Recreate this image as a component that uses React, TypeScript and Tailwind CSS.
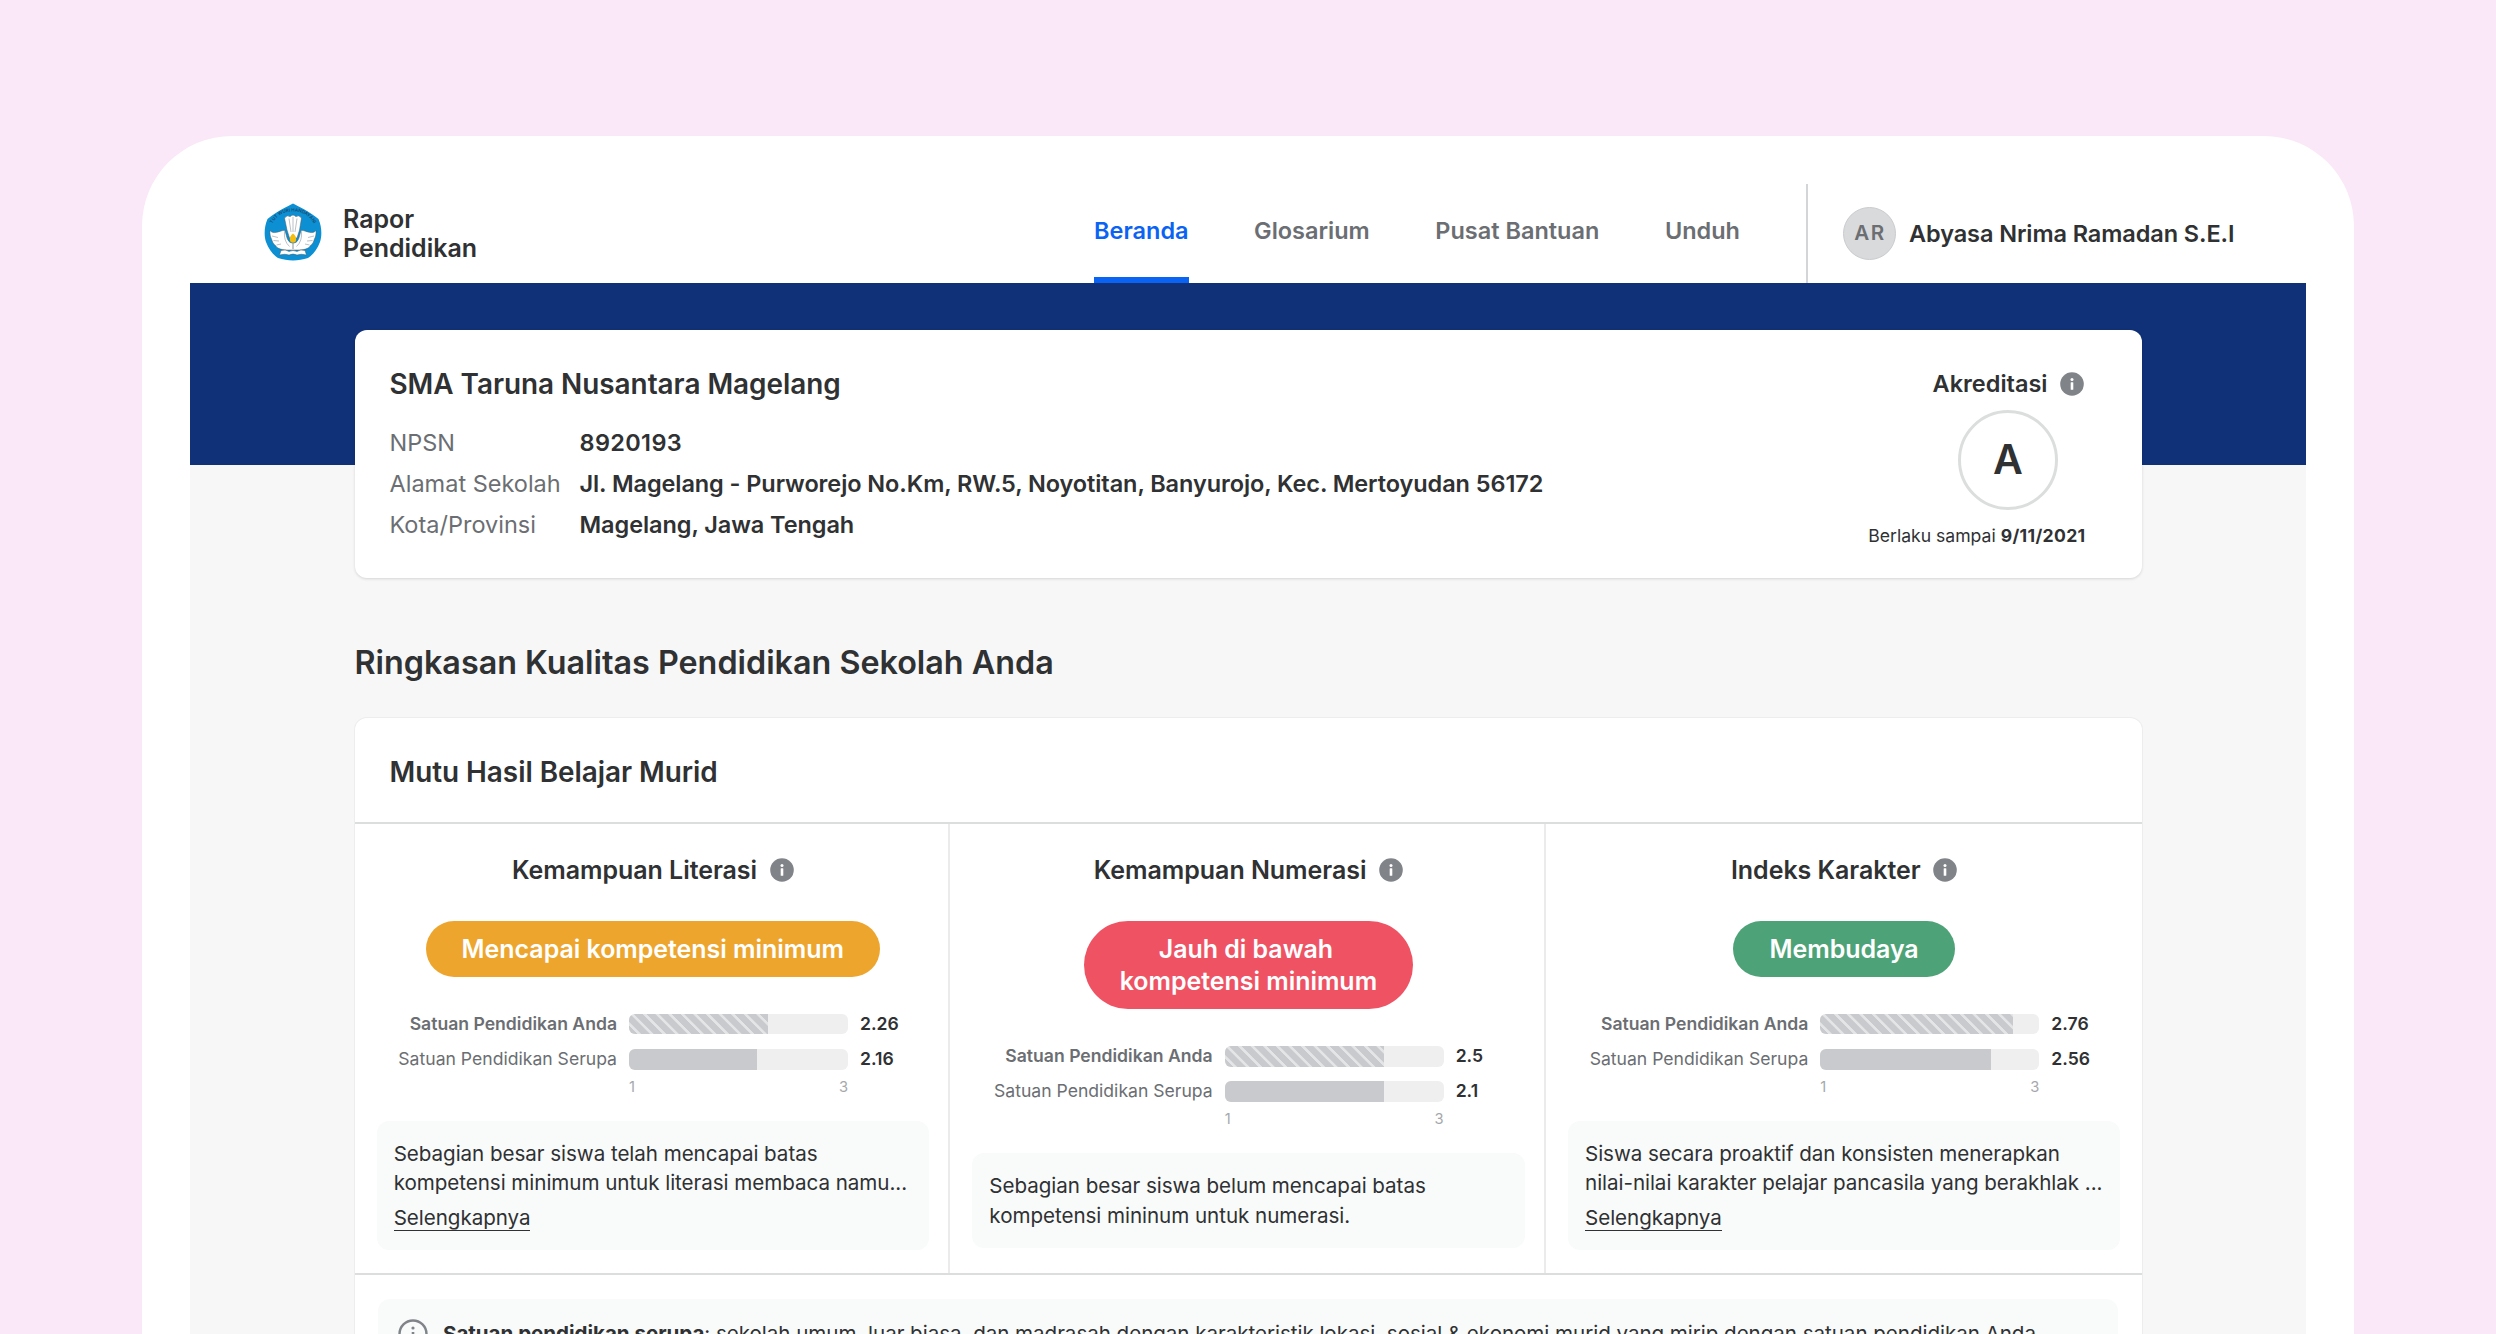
import React from "react";

const STRIPES =
  "bg-[repeating-linear-gradient(45deg,#c9cacd_0px,#c9cacd_5.7px,#e4e5e6_6.3px,#e4e5e6_8.3px,#c9cacd_8.9px)]";

function InfoIcon() {
  return (
    <svg viewBox="0 0 24 24" className="h-6 w-6 shrink-0">
      <circle cx="12" cy="12" r="11.8" fill="#808489" />
      <circle cx="12" cy="7.4" r="1.5" fill="#fff" />
      <rect x="10.7" y="10.2" width="2.6" height="7.6" rx="0.6" fill="#fff" />
    </svg>
  );
}

function Emblem() {
  return (
    <svg viewBox="0 0 58 58" className="-mt-[3px] h-[58px] w-[58px] shrink-0">
      <path
        d="M29 0.5C35 4 45 8 54.5 16C58 24 58 33 56 39C53 47 48.500 52 44 55C34 58.300 24 58.300 14 55C9.500 52 5 47 2 39C0 33 0 24 3.500 16C13 8 23 4 29 0.500Z"
        fill="#0c8fd3"
      />
      <path id="motto" d="M7.500 22.500C13 10.500 22 8.500 29 8.500S45 10.500 50.500 22.500" fill="none" />
      <text fontSize="4.500" fontWeight="600" fill="#1b4a6e" fontFamily="Inter, sans-serif">
        <textPath href="#motto" startOffset="50%" textAnchor="middle">TUT WURI HANDAYANI</textPath>
      </text>
      <g fill="#fff" stroke="#4b5a63" strokeWidth="0.5" strokeLinejoin="round">
        <path d="M20.500 15Q23.500 11.500 26 13.700Q29 10.500 32 13.700Q34.500 11.500 37.500 15L35.500 27L33 35H25.500L23 27Z" />
        <path d="M6 27.500C10 32 15 28 20.500 27.200C22.500 30.500 22 35 25 38.500C27 40.500 31 40.500 33 38.500C36 35 35.500 30.500 37.500 27.200C43 28 48 32 52 27.500C52.500 33 50.500 35.500 49.800 38C49 41 46.500 42 45 44.500C40 47.500 35 47 29 47C23 47 18 47.500 13 44.500C11.500 42 9 41 8.200 38C7.500 35.500 5.500 33 6 27.500Z" />
        <path d="M17 47.500Q22 46 25 48.500Q29 46.500 33 48.500Q36 46 41 47.500L42.500 52Q37 50.500 33 52Q29 50 25 52Q21 50.500 15.500 52Z" />
      </g>
      <g stroke="#8b979d" strokeWidth="0.600" fill="none">
        <path d="M25 15.500L27 29M29 14V29M33 15.500L31 29M8 33L14 34.500M9.500 37.500L15 38M12.500 42L17 41M50 33L44 34.500M48.500 37.500L43 38M45.500 42L41 41M20.500 28.500Q19.500 38 25.500 43.500M37.500 28.500Q38.500 38 32.500 43.500" />
      </g>
      <path d="M29 30.500C31.500 32.500 32.800 35 32 37.500C31.500 40.500 26.500 40.500 26 37.500C25.200 35 26.500 32.500 29 30.500Z" fill="#f4bd12" />
      <path d="M29 40V46" stroke="#65747c" strokeWidth="0.800" />
    </svg>
  );
}

const NAV = [
  { label: "Beranda", active: true },
  { label: "Glosarium" },
  { label: "Pusat Bantuan" },
  { label: "Unduh" },
];

function Header() {
  return (
    <header className="flex h-[99px] items-stretch pl-[74px]">
      <div className="flex items-center">
        <Emblem />
        <div className="ml-[21px] pt-[1px] text-[24.97px] leading-[29.4px] font-semibold">
          Rapor
          <br />
          Pendidikan
        </div>
      </div>
      <nav className="ml-auto flex gap-[65.5px] text-[23.5px] font-semibold">
        {NAV.map((item) => (
          <a
            key={item.label}
            className={
              item.active
                ? "flex items-center border-b-[6px] border-[#0b63f3] text-[#0b63f3]"
                : "flex items-center border-b-[6px] border-transparent text-[#6b6e72]"
            }
          >
            {item.label}
          </a>
        ))}
      </nav>
      <div className="ml-[66px] flex w-[500px] items-center border-l-2 border-[#d3d5d7] pl-[35px]">
        <div className="flex h-[53px] w-[53px] items-center justify-center rounded-full border border-[#c9cbcd] bg-[#d9dadc] pl-[1px] text-[20.6px] font-semibold tracking-[1.5px] text-[#6b6e72]">
          AR
        </div>
        <div className="ml-[13px] text-[23.5px] leading-8 font-semibold tracking-[-0.09px] whitespace-nowrap">
          Abyasa Nrima Ramadan S.E.I
        </div>
      </div>
    </header>
  );
}

const DETAILS = [
  { name: "NPSN", value: "8920193", tracking: "tracking-[0.35px]" },
  {
    name: "Alamat Sekolah",
    value: "Jl. Magelang - Purworejo No.Km, RW.5, Noyotitan, Banyurojo, Kec. Mertoyudan 56172",
    tracking: "tracking-[-0.08px]",
  },
  { name: "Kota/Provinsi", value: "Magelang, Jawa Tengah", tracking: "tracking-[-0.07px]" },
];

function SchoolCard() {
  return (
    <section className="relative -mt-[135px] flex h-[248px] justify-between rounded-xl bg-white pt-9 pr-[56px] pl-[35px] shadow-[0_1px_3px_rgba(0,0,0,0.14)]">
      <div>
        <h1 className="text-[27.9px] leading-9 font-semibold tracking-[-0.02px]">SMA Taruna Nusantara Magelang</h1>
        <dl className="mt-5 text-[23.5px] leading-[41.1px]">
          {DETAILS.map(({ name, value, tracking }) => (
            <div key={name} className="flex whitespace-nowrap">
              <dt className="w-[190px] text-[#6b6e72]">{name}</dt>
              <dd className={"font-semibold " + tracking}>{value}</dd>
            </div>
          ))}
        </dl>
      </div>
      <div className="flex flex-col items-end">
        <div className="mr-[2px] flex flex-col items-center">
          <div className="flex items-center gap-3 text-[23.5px] leading-9 font-semibold">
            Akreditasi
            <InfoIcon />
          </div>
          <div className="mt-2 flex h-[100px] w-[100px] items-center justify-center rounded-full border-[3px] border-[#dcdede] text-[41px] font-semibold">
            A
          </div>
        </div>
        <p className="mt-[12.5px] text-[17.6px] leading-[26px]">
          Berlaku sampai <b className="font-bold tracking-[0.33px]">9/11/2021</b>
        </p>
      </div>
    </section>
  );
}

type Metric = {
  title: string;
  status: string[];
  tone: string;
  own: string;
  ownWidth: number;
  peer: string;
  peerWidth: number;
  text: string[];
  more?: boolean;
};

const METRICS: Metric[] = [
  {
    title: "Kemampuan Literasi",
    status: ["Mencapai kompetensi minimum"],
    tone: "bg-[#eda52d]",
    own: "2.26",
    ownWidth: 138.5,
    peer: "2.16",
    peerWidth: 127.5,
    text: ["Sebagian besar siswa telah mencapai batas", "kompetensi minimum untuk literasi membaca namu..."],
    more: true,
  },
  {
    title: "Kemampuan Numerasi",
    status: ["Jauh di bawah", "kompetensi minimum"],
    tone: "bg-[#ee5263]",
    own: "2.5",
    ownWidth: 159,
    peer: "2.1",
    peerWidth: 159,
    text: ["Sebagian besar siswa belum mencapai batas", "kompetensi mininum untuk numerasi."],
  },
  {
    title: "Indeks Karakter",
    status: ["Membudaya"],
    tone: "bg-[#4da377]",
    own: "2.76",
    ownWidth: 193,
    peer: "2.56",
    peerWidth: 171,
    text: ["Siswa secara proaktif dan konsisten menerapkan", "nilai-nilai karakter pelajar pancasila yang berakhlak ..."],
    more: true,
  },
];

function ScoreRow({ label, value, width, own }: { label: string; value: string; width: number; own?: boolean }) {
  return (
    <div className="flex h-[20.5px] items-center text-[17.6px]">
      <div className={own ? "w-[240.5px] text-right font-semibold text-[#6b6e72]" : "w-[240.5px] text-right text-[#6b6e72]"}>
        {label}
      </div>
      <div className="ml-3 h-full w-[219px] overflow-hidden rounded-md bg-[#efefef]">
        <div className={own ? "h-full " + STRIPES : "h-full bg-[#c9cacd]"} style={{ width }} />
      </div>
      <div className="ml-3 font-semibold">{value}</div>
    </div>
  );
}

function MetricColumn({ metric }: { metric: Metric }) {
  return (
    <div className="flex flex-col border-r-2 border-[#ebebec] pt-[30px] pl-[22px] last:border-r-0">
      <div className="flex w-[552.5px] flex-col items-center">
        <h3 className="flex items-center gap-[12.5px] text-[24.97px] leading-8 font-semibold tracking-[-0.03px]">
          {metric.title}
          <InfoIcon />
        </h3>
        <div
          className={
            "mt-[35px] rounded-[44px] px-[36px] pt-[12.2px] pb-[11.3px] text-center text-[24.97px] leading-[32.3px] font-semibold tracking-[-0.03px] text-white " +
            metric.tone
          }
        >
          {metric.status.map((line) => (
            <div key={line} className="not-last:pr-[5px]">
              {line}
            </div>
          ))}
        </div>
        <div className="mt-[37px] flex w-full flex-col gap-[14.8px]">
          <ScoreRow own label="Satuan Pendidikan Anda" value={metric.own} width={metric.ownWidth} />
          <ScoreRow label="Satuan Pendidikan Serupa" value={metric.peer} width={metric.peerWidth} />
        </div>
        <div className="mt-[7px] flex w-full pl-[252.5px] text-[14.7px] leading-5 text-[#a5a8ab]">
          <div className="flex w-[219px] justify-between">
            <span>1</span>
            <span>3</span>
          </div>
        </div>
        <div className="mt-[24.5px] w-full rounded-xl bg-[#f9fafa] px-[17.2px] pt-[18px] pb-[17.6px] text-[20.6px] leading-[29.4px] tracking-[-0.05px] whitespace-nowrap">
          {metric.text.map((line) => (
            <div key={line}>{line}</div>
          ))}
          {metric.more && (
            <div className="mt-[5.5px]">
              <a className="inline-block h-[27.5px] border-b-[1.5px] border-[#2f3133]">Selengkapnya</a>
            </div>
          )}
        </div>
      </div>
    </div>
  );
}

export default function App() {
  return (
    <div className="h-[1334px] w-[2496px] overflow-hidden bg-[#fae7f7] px-[142px] pt-[136px] font-['Inter',sans-serif] text-[#2f3133]">
      <div className="h-[1198px] overflow-hidden rounded-t-[90px] bg-white px-12 pt-12">
        <Header />
        <main className="h-[1051px] overflow-hidden bg-[#f7f7f7]">
          <div className="h-[182px] bg-[#103178]" />
          <div className="mx-auto w-[1787px]">
            <SchoolCard />
            <h2 className="mt-[63px] text-[32.3px] leading-[44px] font-semibold">
              Ringkasan Kualitas Pendidikan Sekolah Anda
            </h2>
            <section className="mt-[33px] rounded-t-xl bg-white shadow-[0_0_0_1px_#ededed]">
              <h2 className="h-[106px] border-b-2 border-[#dcdddd] pl-[35px] text-[27.9px] leading-[108px] font-semibold tracking-[-0.03px]">
                Mutu Hasil Belajar Murid
              </h2>
              <div className="grid h-[451px] grid-cols-3 border-b-2 border-[#dcdddd]">
                {METRICS.map((metric) => (
                  <MetricColumn key={metric.title} metric={metric} />
                ))}
              </div>
              <div className="px-[23.5px] pt-6">
                <div className="flex h-[100px] items-start rounded-xl bg-[#f9fafa] pt-5 pl-5">
                  <svg viewBox="0 0 30 30" className="h-[30px] w-[30px] shrink-0">
                    <circle cx="15" cy="15" r="13.5" fill="none" stroke="#808489" strokeWidth="2.400" />
                    <circle cx="15" cy="9" r="1.6" fill="#808489" />
                    <rect x="13.700" y="13" width="2.600" height="9" fill="#808489" />
                  </svg>
                  <p className="ml-[15px] text-[20.6px] leading-[30px] tracking-[-0.045px] whitespace-nowrap">
                    <b className="font-bold">Satuan pendidikan serupa</b>: sekolah umum, luar biasa, dan madrasah dengan
                    karakteristik lokasi, sosial &amp; ekonomi murid yang mirip dengan satuan pendidikan Anda.
                  </p>
                </div>
              </div>
            </section>
          </div>
        </main>
      </div>
    </div>
  );
}
